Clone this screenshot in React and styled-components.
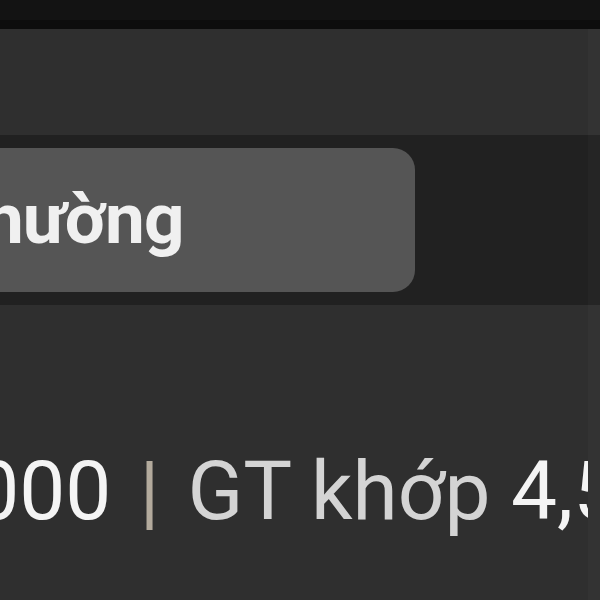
import React from 'react'
import styled, { createGlobalStyle } from 'styled-components'

const Global = createGlobalStyle`
  html, body {
    margin: 0;
    padding: 0;
    background: #2f2f2f;
  }
  body {
    font-family: Roboto, 'Liberation Sans', sans-serif;
  }
`

const Page = styled.div`
  width: 600px;
  height: 600px;
  overflow: hidden;
  display: flex;
  flex-direction: column;
  background: #2f2f2f;
`

const TopBar = styled.div`
  height: 20px;
  flex: none;
  background: #131313;
  border-bottom: 9px solid #0d0d0d;
`

const Section = styled.div`
  flex: none;
  box-sizing: border-box;
  border-right: 12px solid rgba(255, 255, 255, 0.018);
`

const Header = styled(Section)`
  height: 106px;
  background: #2f2f2f;
`

const TabBar = styled(Section)`
  height: 170px;
  background: #212121;
  display: flex;
  align-items: center;
  overflow: hidden;
`

const Tab = styled.div`
  height: 144px;
  width: 470px;
  margin-left: -55px;
  flex: none;
  background: #555555;
  border-radius: 22px;
  display: flex;
  align-items: center;
  box-sizing: border-box;
  color: #f0f0f0;
  font-weight: 700;
  font-size: 71px;
  letter-spacing: -1px;
  white-space: nowrap;
  overflow: hidden;
`

const TabLabel = styled.span`
  margin-left: ${(p) => p.shift}px;
  margin-top: -4px;
`

const Body = styled(Section)`
  flex: 1;
  display: flex;
  align-items: flex-start;
  padding-top: 145px;
  overflow: hidden;
`

const Line = styled.div`
  white-space: nowrap;
  font-size: 82px;
  line-height: 1;
  margin-left: ${(p) => p.shift}px;
  color: #d4d4d4;
`

const Value = styled.span`
  color: #f4f4f4;
`

const Sep = styled.span`
  color: #b3aa9c;
  margin: 0 28px;
`

const App = () => (
  <>
    <Global />
    <Page>
      <TopBar />
      <Header />
      <TabBar>
        <Tab>
          <TabLabel shift={-4}>Thường</TabLabel>
        </Tab>
      </TabBar>
      <Body>
        <Line shift={-205}>
          KL <Value>1,000</Value>
          <Sep>|</Sep>GT khớp <Value>4,500</Value>
        </Line>
      </Body>
    </Page>
  </>
)

export default App
